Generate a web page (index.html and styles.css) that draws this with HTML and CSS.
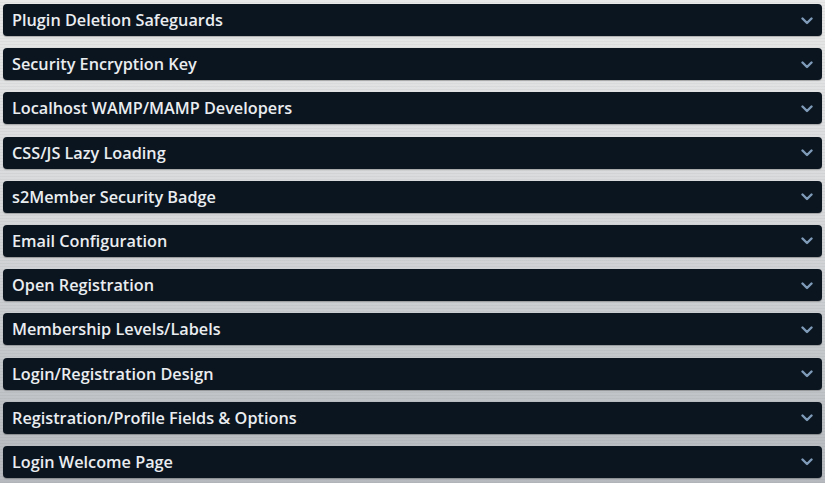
FILE: index.html
```html
<!DOCTYPE html>
<html lang="en">
<head>
  <meta charset="UTF-8" />
  <title>s2Member Options</title>
  <link rel="stylesheet" href="styles.css">
</head>
<body>
  <div class="sections">
    <div class="section"><span class="section-title">Plugin Deletion Safeguards</span><svg class="chevron" viewBox="0 0 12 8"><path d="M1.5 1.5 L6 6 L10.5 1.5" /></svg></div>
    <div class="section"><span class="section-title">Security Encryption Key</span><svg class="chevron" viewBox="0 0 12 8"><path d="M1.5 1.5 L6 6 L10.5 1.5" /></svg></div>
    <div class="section"><span class="section-title">Localhost WAMP/MAMP Developers</span><svg class="chevron" viewBox="0 0 12 8"><path d="M1.5 1.5 L6 6 L10.5 1.5" /></svg></div>
    <div class="section"><span class="section-title">CSS/JS Lazy Loading</span><svg class="chevron" viewBox="0 0 12 8"><path d="M1.5 1.5 L6 6 L10.5 1.5" /></svg></div>
    <div class="section"><span class="section-title">s2Member Security Badge</span><svg class="chevron" viewBox="0 0 12 8"><path d="M1.5 1.5 L6 6 L10.5 1.5" /></svg></div>
    <div class="section"><span class="section-title">Email Configuration</span><svg class="chevron" viewBox="0 0 12 8"><path d="M1.5 1.5 L6 6 L10.5 1.5" /></svg></div>
    <div class="section"><span class="section-title">Open Registration</span><svg class="chevron" viewBox="0 0 12 8"><path d="M1.5 1.5 L6 6 L10.5 1.5" /></svg></div>
    <div class="section"><span class="section-title">Membership Levels/Labels</span><svg class="chevron" viewBox="0 0 12 8"><path d="M1.5 1.5 L6 6 L10.5 1.5" /></svg></div>
    <div class="section"><span class="section-title">Login/Registration Design</span><svg class="chevron" viewBox="0 0 12 8"><path d="M1.5 1.5 L6 6 L10.5 1.5" /></svg></div>
    <div class="section"><span class="section-title">Registration/Profile Fields &amp; Options</span><svg class="chevron" viewBox="0 0 12 8"><path d="M1.5 1.5 L6 6 L10.5 1.5" /></svg></div>
    <div class="section"><span class="section-title">Login Welcome Page</span><svg class="chevron" viewBox="0 0 12 8"><path d="M1.5 1.5 L6 6 L10.5 1.5" /></svg></div>
  </div>
</body>
</html>
```

FILE: styles.css
```css
html, body {
  margin: 0;
  padding: 0;
  height: 100%;
}
body {
  font-family: "Open Sans", sans-serif;
  background:
    repeating-linear-gradient(0deg, rgba(0,0,0,0.035) 0 1px, transparent 1px 3px),
    linear-gradient(180deg, #e8e8e8 0%, #d6d8da 45%, #b6babe 100%);
}
.sections {
  display: flex;
  flex-direction: column;
  gap: 12.2px;
  padding: 4px 3px 0 3px;
}
.section {
  height: 32px;
  display: flex;
  align-items: center;
  justify-content: space-between;
  background: #0b1520;
  border-radius: 4px;
  padding: 0 9px 0 9px;
  box-shadow: 0 1px 1px rgba(0,0,0,0.25);
}
.section-title {
  color: #eaedf0;
  font-size: 16.25px;
  font-weight: 600;
  line-height: 32px;
}
.chevron {
  width: 12px;
  height: 8px;
  margin-top: 1px;
  fill: none;
  stroke: #7f9bb8;
  stroke-width: 2.4;
  stroke-linecap: round;
  stroke-linejoin: round;
}
```
